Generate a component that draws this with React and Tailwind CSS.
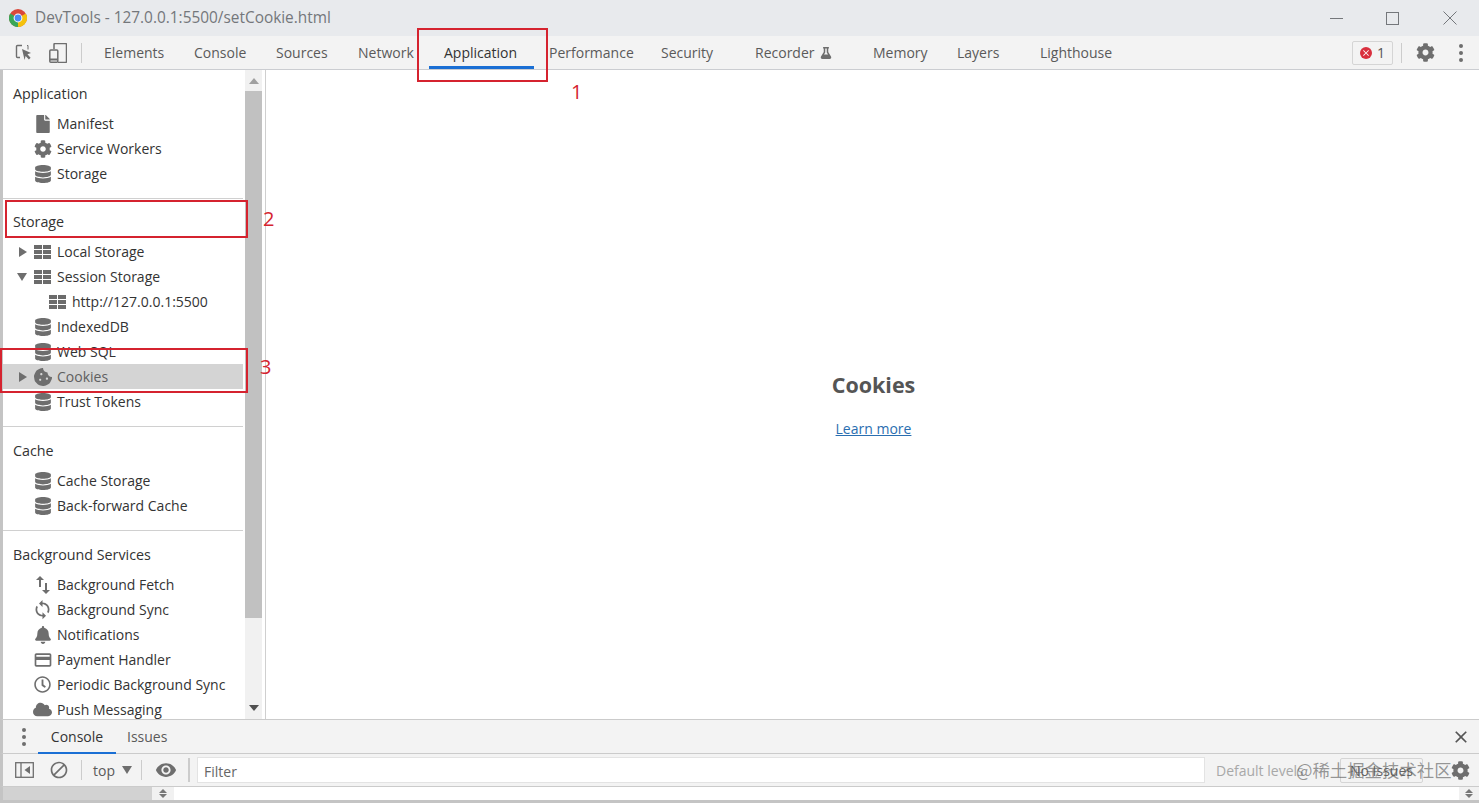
import { FaFile, FaCog, FaDatabase, FaCookieBite, FaBell, FaCloud, FaRegClock, FaFlask } from 'react-icons/fa'
import { MdSwapVert, MdSync, MdOutlineCreditCard, MdBlock, MdVisibility, MdClose } from 'react-icons/md'

const TABS = [
  { label: 'Elements', width: 'w-[90px]' },
  { label: 'Console', width: 'w-[82px]' },
  { label: 'Sources', width: 'w-[82px]' },
  { label: 'Network', width: 'w-[86px]' },
  { label: 'Application', width: 'w-[105px]', active: true },
  { label: 'Performance', width: 'w-[112px]' },
  { label: 'Security', width: 'w-[94px]' },
  { label: 'Recorder', width: 'w-[118px]', flask: true },
  { label: 'Memory', width: 'w-[84px]' },
  { label: 'Layers', width: 'w-[83px]' },
  { label: 'Lighthouse', width: 'w-[90px]' },
]

function TableIcon() {
  return (
    <svg width="17" height="14" viewBox="0 0 17 14" fill="#6b6b6b">
      <rect x="0" y="0" width="8" height="4" />
      <rect x="9" y="0" width="8" height="4" />
      <rect x="0" y="5" width="8" height="4" />
      <rect x="9" y="5" width="8" height="4" />
      <rect x="0" y="10" width="8" height="4" />
      <rect x="9" y="10" width="8" height="4" />
    </svg>
  )
}

function ChromeLogo() {
  return (
    <svg width="18" height="18" viewBox="0 0 18 18">
      <circle cx="9" cy="9" r="9" fill="#d9483b" />
      <path d="M9 9 L1.2 4.5 A9 9 0 0 0 9 18 Z" fill="#3aa757" />
      <path d="M9 9 L9 18 A9 9 0 0 0 16.8 4.5 Z" fill="#f4c20d" />
      <circle cx="9" cy="9" r="4.4" fill="#fff" />
      <circle cx="9" cy="9" r="3.4" fill="#4a8af4" />
    </svg>
  )
}

function InspectIcon() {
  return (
    <svg width="17" height="17" viewBox="0 0 17 17" fill="none">
      <path d="M7 1.5H2.5a1 1 0 0 0-1 1v10a1 1 0 0 0 1 1H5" stroke="#6e6e6e" strokeWidth="1.4" />
      <path d="M12 1.5h1v4" stroke="#6e6e6e" strokeWidth="1" />
      <path d="M7 5l9 4-3.6 1.3 3.2 3.4-1.7 1.7-3.3-3.4L9.6 16z" fill="#6e6e6e" />
    </svg>
  )
}

function DeviceIcon() {
  return (
    <svg width="18" height="20" viewBox="0 0 18 20" fill="none" stroke="#6e6e6e" strokeWidth="1.5">
      <path d="M5 6V1.5a1 1 0 0 1 1-1h10.5a1 1 0 0 1 1 1v17a1 1 0 0 1-1 1H9" />
      <rect x="0.8" y="7" width="8" height="12.2" rx="1" />
      <path d="M1 16.5h7.5" strokeWidth="2" />
    </svg>
  )
}

function DockIcon() {
  return (
    <svg width="19" height="16" viewBox="0 0 19 16" fill="none">
      <rect x="0.7" y="0.7" width="17.6" height="14.6" stroke="#6e6e6e" strokeWidth="1.3" />
      <path d="M6 1v14" stroke="#6e6e6e" strokeWidth="1.3" />
      <path d="M15 4v8l-5.5-4z" fill="#6e6e6e" />
    </svg>
  )
}

function ThinClose() {
  return (
    <svg width="14" height="14" viewBox="0 0 14 14" stroke="#74777b" strokeWidth="1">
      <path d="M0.5 0.5l13 13M13.5 0.5l-13 13" />
    </svg>
  )
}

function Kebab({ className }) {
  return (
    <div className={`flex flex-col gap-[3px] ${className}`}>
      <span className="h-[4px] w-[4px] rounded-full bg-[#6e6e6e]" />
      <span className="h-[4px] w-[4px] rounded-full bg-[#6e6e6e]" />
      <span className="h-[4px] w-[4px] rounded-full bg-[#6e6e6e]" />
    </div>
  )
}

function Arrow({ dir = 'right', className = '' }) {
  const shapes = {
    right: 'border-y-[5px] border-l-[8px] border-y-transparent border-l-[#6e6e6e]',
    down: 'border-x-[5px] border-t-[8px] border-x-transparent border-t-[#6e6e6e]',
    up: 'border-x-[5px] border-b-[6px] border-x-transparent border-b-[#a0a0a0]',
  }
  return <span className={`block h-0 w-0 ${shapes[dir]} ${className}`} />
}

const db = <FaDatabase size={18} color="#6e6e6e" />
const table = <TableIcon />

const SECTIONS = [
  {
    title: 'Application',
    pad: 'pt-[12px]',
    items: [
      { label: 'Manifest', icon: <FaFile size={18} color="#6e6e6e" /> },
      { label: 'Service Workers', icon: <FaCog size={18} color="#6e6e6e" /> },
      { label: 'Storage', icon: db },
    ],
  },
  {
    title: 'Storage',
    pad: 'pt-[11px]',
    items: [
      { label: 'Local Storage', icon: table, caret: 'right' },
      { label: 'Session Storage', icon: table, caret: 'down' },
      { label: 'http://127.0.0.1:5500', icon: table, nested: true },
      { label: 'IndexedDB', icon: db },
      { label: 'Web SQL', icon: db },
      { label: 'Cookies', icon: <FaCookieBite size={18} color="#6e6e6e" />, caret: 'right', selected: true },
      { label: 'Trust Tokens', icon: db },
    ],
  },
  {
    title: 'Cache',
    pad: 'pt-[12px]',
    items: [
      { label: 'Cache Storage', icon: db },
      { label: 'Back-forward Cache', icon: db },
    ],
  },
  {
    title: 'Background Services',
    pad: 'pt-[12px]',
    items: [
      { label: 'Background Fetch', icon: <MdSwapVert size={24} color="#6e6e6e" /> },
      { label: 'Background Sync', icon: <MdSync size={21} color="#6e6e6e" /> },
      { label: 'Notifications', icon: <FaBell size={18} color="#6e6e6e" /> },
      { label: 'Payment Handler', icon: <MdOutlineCreditCard size={20} color="#6e6e6e" /> },
      { label: 'Periodic Background Sync', icon: <FaRegClock size={17} color="#6e6e6e" /> },
      { label: 'Push Messaging', icon: <FaCloud size={19} color="#6e6e6e" /> },
    ],
  },
]

function TreeRow({ item }) {
  return (
    <div className={`flex h-[25px] items-center ${item.selected ? 'bg-[#d4d4d4] text-[#5f5f5f]' : 'text-[#333]'}`}>
      <span className="flex w-[27px] shrink-0 justify-end pr-[3px]">
        {item.caret && <Arrow dir={item.caret} />}
      </span>
      {item.nested && <span className="w-[15px] shrink-0" />}
      <span className="mr-[2px] flex w-[25px] shrink-0 items-center justify-center">{item.icon}</span>
      <span className="whitespace-nowrap">{item.label}</span>
    </div>
  )
}

function Sidebar() {
  return (
    <div className="flex h-full w-[263px] shrink-0 border-r border-r-[#cfcfcf] pr-[3px]">
      <div className="h-full w-[242px] shrink-0 overflow-hidden pr-[2px]">
        {SECTIONS.map((s, i) => (
          <div key={s.title} className={`pb-[12px] ${i > 0 ? 'border-t border-t-[#d0d0d0]' : ''}`}>
            <div className={`${s.pad} mb-[5px] pl-[10px]`}>
              <div className="flex h-[24px] items-center text-[14.3px] text-[#333]">{s.title}</div>
            </div>
            {s.items.map((item) => (
              <TreeRow key={item.label} item={item} />
            ))}
          </div>
        ))}
      </div>
      <div className="flex h-full w-[17px] shrink-0 flex-col items-center bg-[#f1f1f1]">
        <div className="flex h-[21px] items-center">
          <Arrow dir="up" />
        </div>
        <div className="h-[527px] w-full bg-[#c1c1c1]" />
        <div className="flex flex-1 items-end pb-[8px]">
          <Arrow dir="down" className="!border-t-[6px] !border-t-[#505050]" />
        </div>
      </div>
    </div>
  )
}

function Box({ className }) {
  return <div className={`pointer-events-none absolute border-2 border-[#d5232f] ${className}`} />
}

function Mark({ className, children }) {
  return <span className={`pointer-events-none absolute text-[20px] leading-none text-[#d5232f] ${className}`}>{children}</span>
}

export default function App() {
  return (
    <div className="relative flex h-[803px] w-[1479px] flex-col overflow-hidden bg-[#f3f3f3] font-['Open_Sans',_'Liberation_Sans',sans-serif] text-[14px]">
      {/* title bar */}
      <div className="flex h-[36px] shrink-0 items-center bg-[#e8eaed] pl-[9px]">
        <ChromeLogo />
        <span className="ml-[8px] text-[15.4px] text-[#74777b]">DevTools - 127.0.0.1:5500/setCookie.html</span>
        <div className="ml-auto flex items-center">
          <span className="h-px w-[13px] bg-[#74777b]" />
          <span className="ml-[43px] h-[13px] w-[13px] border border-[#74777b]" />
          <span className="ml-[44px] mr-[22px]"><ThinClose /></span>
        </div>
      </div>

      {/* main toolbar */}
      <div className="flex h-[34px] shrink-0 items-center border-b border-b-[#cbcdd1] pl-[15px] text-[#5a5a5a]">
        <InspectIcon />
        <span className="ml-[17px]"><DeviceIcon /></span>
        <span className="ml-[14px] mr-[22px] h-[20px] w-px bg-[#ccc]" />
        {TABS.map((t) => (
          <div key={t.label} className={`relative flex h-full shrink-0 items-center ${t.width}`}>
            <span className={`whitespace-nowrap ${t.active ? 'text-[#333]' : ''}`}>{t.label}</span>
            {t.flask && <FaFlask size={12} color="#6e6e6e" className="ml-[5px]" />}
            {t.active && <span className="absolute bottom-0 left-[-15px] h-[3px] w-[105px] bg-[#1a6fd4]" />}
          </div>
        ))}
        <div className="ml-auto flex items-center">
          <div className="flex h-[24px] w-[41px] items-center justify-center gap-[5px] rounded-[2px] border border-[#d5d5d5]">
            <span className="flex h-[12px] w-[12px] items-center justify-center rounded-full bg-[#d9303e]">
              <MdClose size={10} color="#fff" />
            </span>
            <span className="text-[#555]">1</span>
          </div>
          <span className="ml-[8px] h-[20px] w-px bg-[#ccc]" />
          <FaCog size={19} color="#6e6e6e" className="ml-[14px]" />
          <Kebab className="ml-[24px] mr-[16px]" />
        </div>
      </div>

      {/* sidebar + content */}
      <div className="flex h-[649px] shrink-0 border-l-[3px] border-l-[#c4c4c4] bg-white">
        <Sidebar />
        <div className="flex flex-1 flex-col items-center pl-[2px] pt-[300px]">
          <div className="text-[21.5px] font-bold leading-[30px] text-[#555]">Cookies</div>
          <a className="mt-[19px] leading-[20px] text-[#2a6eb0] underline">Learn more</a>
        </div>
      </div>

      {/* drawer */}
      <div className="flex h-[35px] shrink-0 items-stretch border-y border-y-[#cbcbcb] border-l-[3px] border-l-[#c4c4c4] text-[#5a5a5a]">
        <Kebab className="ml-[19px] self-center" />
        <div className="relative ml-[12px] flex w-[78px] items-center justify-center text-[#333]">
          Console
          <span className="absolute bottom-[-1px] left-0 h-[2px] w-full bg-[#1a6fd4]" />
        </div>
        <div className="ml-[11px] flex items-center">Issues</div>
        <MdClose size={20} color="#555" className="ml-auto mr-[8px] self-center" />
      </div>

      <div className="flex h-[33px] shrink-0 items-center border-b border-b-[#cbcbcb] border-l-[3px] border-l-[#c4c4c4] text-[#5a5a5a]">
        <span className="ml-[12px]"><DockIcon /></span>
        <MdBlock size={20} color="#6e6e6e" className="ml-[15px]" />
        <span className="ml-[12px] h-[20px] w-px bg-[#ccc]" />
        <span className="ml-[11px] pt-[1px]">top</span>
        <Arrow dir="down" className="ml-[7px]" />
        <span className="ml-[9px] h-[20px] w-px bg-[#ccc]" />
        <MdVisibility size={22} color="#6e6e6e" className="ml-[13px]" />
        <span className="ml-[11px] h-[24px] w-[2px] bg-[#ccc]" />
        <div className="ml-[7px] flex h-[26px] w-[1008px] items-center border border-[#e3e3e3] bg-white pl-[6px] pt-[2px] text-[#666]">Filter</div>
        <span className="ml-[11px] whitespace-nowrap pt-[1px] text-[#a8a8a8]">Default levels</span>
        <FaCog size={19} color="#6e6e6e" className="ml-auto mr-[9px]" />
      </div>

      <div className="flex h-[13px] shrink-0 items-stretch border-l-[3px] border-l-[#c4c4c4] bg-white">
        <div className="w-[149px] bg-[#d2d2d2]" />
        <div className="flex w-[22px] flex-col items-center justify-center gap-[1px] bg-[#f1f1f1]">
          <Arrow dir="up" className="!border-x-[4px] !border-b-[4px] !border-b-[#777]" />
          <Arrow dir="down" className="!border-x-[4px] !border-t-[4px] !border-t-[#777]" />
        </div>
        <div className="ml-auto flex w-[20px] flex-col items-center justify-center gap-[1px] bg-[#f1f1f1]">
          <Arrow dir="up" className="!border-x-[4px] !border-b-[4px] !border-b-[#777]" />
          <Arrow dir="down" className="!border-x-[4px] !border-t-[4px] !border-t-[#777]" />
        </div>
      </div>
      <div className="flex-1 bg-[#c4c4c4]" />

      {/* No Issues button sits under the watermark, as in the picture */}
      <div className="absolute left-[1340px] top-[758px] flex h-[25px] w-[83px] items-center justify-center rounded-[2px] border border-[#d5d5d5] text-[#666]">No Issues</div>

      {/* watermark */}
      <span className="pointer-events-none absolute left-[1296px] top-[758px] whitespace-nowrap font-['Noto_Sans_CJK_SC',sans-serif] text-[17.4px] leading-[24px] text-[#555]/60">@稀土掘金技术社区</span>

      {/* red annotations */}
      <Box className="left-[417px] top-[28px] h-[54px] w-[131px]" />
      <Box className="left-[5px] top-[200px] h-[38px] w-[243px]" />
      <Box className="left-0 top-[348px] h-[45px] w-[248px]" />
      <Mark className="left-[571px] top-[82px]">1</Mark>
      <Mark className="left-[263px] top-[209px]">2</Mark>
      <Mark className="left-[260px] top-[357px]">3</Mark>
    </div>
  )
}
